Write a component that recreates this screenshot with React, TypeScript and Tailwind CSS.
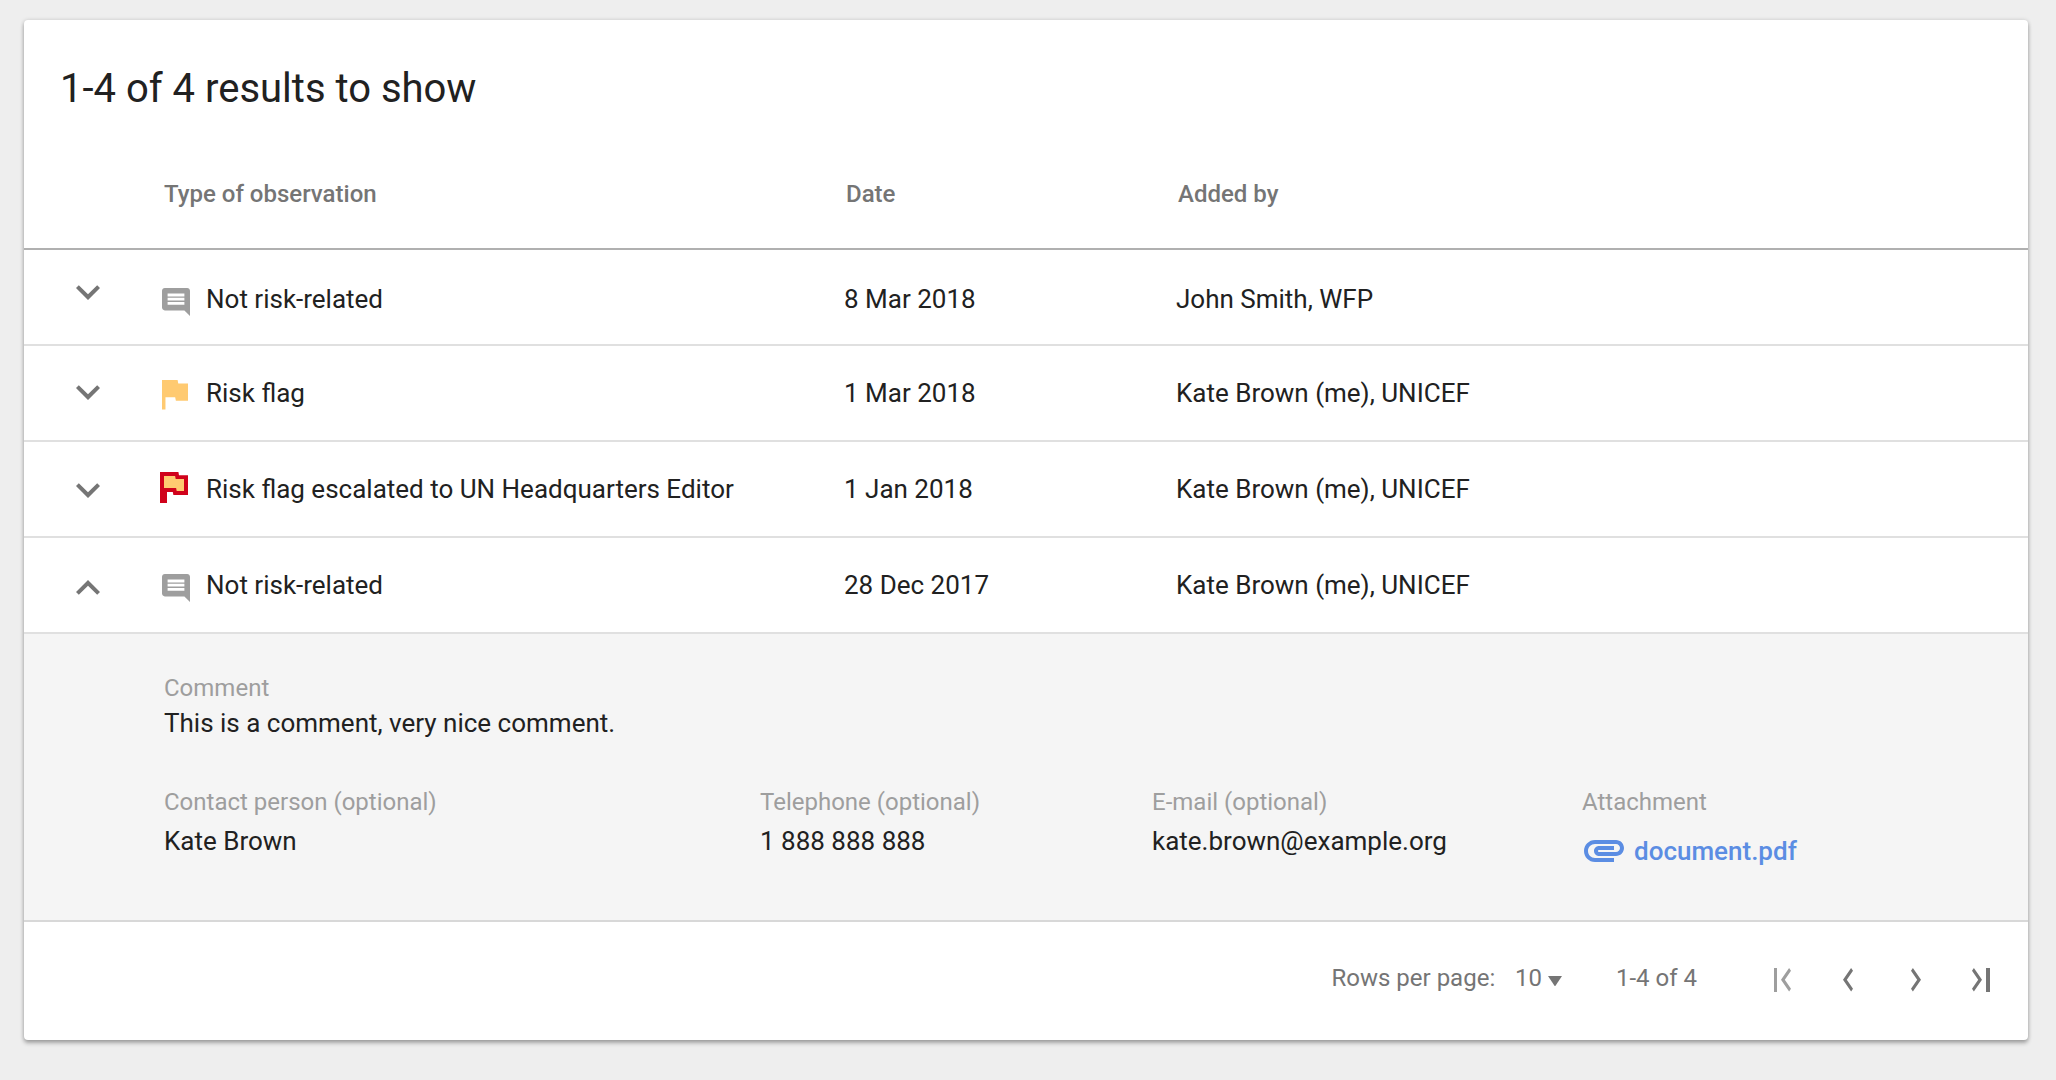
import type { ReactNode } from "react";

type Kind = "comment" | "flag" | "escalated";

type Observation = {
  kind: Kind;
  label: string;
  date: string;
  author: string;
  open?: boolean;
  textClass: string;
  chevronClass: string;
  iconClass: string;
};

const observations: Observation[] = [
  {
    kind: "comment",
    label: "Not risk-related",
    date: "8 Mar 2018",
    author: "John Smith, WFP",
    textClass: "pt-1",
    chevronClass: "pt-[18px]",
    iconClass: "pt-[38px]",
  },
  {
    kind: "flag",
    label: "Risk flag",
    date: "1 Mar 2018",
    author: "Kate Brown (me), UNICEF",
    textClass: "",
    chevronClass: "pt-[22px]",
    iconClass: "pt-[34px]",
  },
  {
    kind: "escalated",
    label: "Risk flag escalated to UN Headquarters Editor",
    date: "1 Jan 2018",
    author: "Kate Brown (me), UNICEF",
    textClass: "",
    chevronClass: "pt-6",
    iconClass: "pt-[30px]",
  },
  {
    kind: "comment",
    label: "Not risk-related",
    date: "28 Dec 2017",
    author: "Kate Brown (me), UNICEF",
    open: true,
    textClass: "",
    chevronClass: "pt-[26px]",
    iconClass: "pt-9",
  },
];

function ExpandIcon({ open }: { open?: boolean }) {
  return (
    <svg className="size-12 text-[#757575]" viewBox="0 0 24 24" fill="currentColor">
      <path
        d={
          open
            ? "M12 8l-6 6 1.41 1.41L12 10.83l4.59 4.58L18 14z"
            : "M16.59 8.59L12 13.17 7.41 8.59 6 10l6 6 6-6z"
        }
      />
    </svg>
  );
}

function KindIcon({ kind }: { kind: Kind }) {
  if (kind === "comment") {
    return (
      <svg className="ml-0.5 h-7 w-7 text-[#9e9e9e]" viewBox="2 2 20 20" fill="currentColor">
        <path d="M21.99 4c0-1.1-.89-2-1.99-2H4c-1.1 0-2 .9-2 2v12c0 1.1.9 2 2 2h14l4 4-.01-18zM18 14H6v-2h12v2zm0-3H6V9h12v2zm0-3H6V6h12v2z" />
      </svg>
    );
  }
  if (kind === "flag") {
    return (
      <svg className="ml-0.5 h-[29.5px] w-[26px] text-[#ffca71]" viewBox="5 4 15 17" fill="currentColor">
        <path d="M14.4 6L14 4H5v17h2v-7h5.6l.4 2h7V6z" />
      </svg>
    );
  }
  return (
    <svg className="h-[31px] w-7" viewBox="0 0 28 31">
      <path fill="#d0021b" d="M0 0H18.4L19 3.2H28V23H13.4L12.8 20H7V31H0z" />
      <path fill="#ffca71" d="M4 4H15.1L15.7 7.1H24V19H16.7L16.1 16H4z" />
    </svg>
  );
}

function Chevron({ right }: { right?: boolean }) {
  return (
    <svg
      className="h-[23.5px] w-[10px]"
      viewBox={right ? "8.59 6 7.41 12" : "8 6 7.41 12"}
      preserveAspectRatio="none"
      fill="currentColor"
    >
      <path
        d={
          right
            ? "M10 6L8.59 7.41 13.17 12l-4.58 4.59L10 18l6-6z"
            : "M15.41 7.41L14 6l-6 6 6 6 1.41-1.41L10.83 12z"
        }
      />
    </svg>
  );
}

function Field({ label, className, children }: { label: string; className: string; children: ReactNode }) {
  return (
    <div className={className}>
      <div className="text-2xl leading-7 text-[#9e9e9e]">{label}</div>
      {children}
    </div>
  );
}

export default function App() {
  return (
    <div className="h-[1080px] w-[2056px] bg-[#eeeeee] px-6 pt-5 font-[Roboto,sans-serif] text-[26px] leading-8 whitespace-nowrap text-[#212121]">
      <main className="h-[1020px] w-[2004px] rounded-[4px] bg-white shadow-[0_0_4px_rgba(0,0,0,0.14),0_3px_4px_rgba(0,0,0,0.3)]">
        <h1 className="h-[138px] pt-[45px] pl-9 text-[40px] leading-[48px]">1-4 of 4 results to show</h1>

        <div className="flex h-[92px] border-b-2 border-[#b0b0b0] pt-[22px] pl-[140px] text-2xl leading-7 font-medium text-[#757575]">
          <div className="w-[682px]">Type of observation</div>
          <div className="w-[332px]">Date</div>
          <div>Added by</div>
        </div>

        {observations.map((o) => (
          <div key={o.date} className="flex h-24 border-b-2 border-[#e0e0e0]">
            <div className={`w-[136px] pl-10 ${o.chevronClass}`}>
              <ExpandIcon open={o.open} />
            </div>
            <div className={`w-[46px] ${o.iconClass}`}>
              <KindIcon kind={o.kind} />
            </div>
            <div className={`flex items-center ${o.textClass}`}>
              <div className="w-[638px]">{o.label}</div>
              <div className="w-[332px]">{o.date}</div>
              <div>{o.author}</div>
            </div>
          </div>
        ))}

        <section className="h-[288px] border-b-2 border-[#d8d8d8] bg-[#f5f5f5] pt-10 pl-[140px]">
          <Field label="Comment" className="h-[114px]">
            <div className="pt-[5px]">This is a comment, very nice comment.</div>
          </Field>
          <div className="flex">
            <Field label="Contact person (optional)" className="w-[596px]">
              <div className="pt-[9px]">Kate Brown</div>
            </Field>
            <Field label="Telephone (optional)" className="w-[392px]">
              <div className="pt-[9px]">1 888 888 888</div>
            </Field>
            <Field label="E-mail (optional)" className="w-[430px]">
              <div className="pt-[9px]">kate.brown@example.org</div>
            </Field>
            <Field label="Attachment" className="w-[240px]">
              <a className="flex pt-[10px] text-[#5b8de3]">
                <svg className="-ml-0.5 size-12 shrink-0" viewBox="0 0 24 24" fill="currentColor">
                  <path d="M2 12.5C2 9.46 4.46 7 7.5 7H18c2.21 0 4 1.79 4 4s-1.79 4-4 4H9.5C8.12 15 7 13.88 7 12.5S8.12 10 9.5 10H17v2H9.41c-.55 0-.55 1 0 1H18c1.1 0 2-.9 2-2s-.9-2-2-2H7.5C5.57 9 4 10.57 4 12.5S5.57 16 7.5 16H17v2H7.5C4.46 18 2 15.54 2 12.5z" />
                </svg>
                <span className="pt-[9px] pl-[6px] font-medium">document.pdf</span>
              </a>
            </Field>
          </div>
        </section>

        <footer className="flex h-[118px] pt-[42px] pl-[1307.5px] text-2xl leading-7 text-[#757575]">
          <div className="w-[183.5px]">Rows per page:</div>
          <div className="flex w-[101px]">
            10
            <svg className="mt-[11.5px] ml-[6.5px] h-[10.5px] w-[14px]" viewBox="0 0 14 10.5" fill="currentColor">
              <path d="M0 0h14L7 10.5z" />
            </svg>
          </div>
          <div className="w-[158px]">1-4 of 4</div>
          <div className="flex w-[69px] gap-[3.5px] pt-1 text-[#9e9e9e]">
            <span className="h-6 w-[3px] bg-current" />
            <Chevron />
          </div>
          <div className="w-[68px] pt-1">
            <Chevron />
          </div>
          <div className="w-[61px] pt-1">
            <Chevron right />
          </div>
          <div className="flex gap-1 pt-1">
            <Chevron right />
            <span className="h-6 w-[3.5px] bg-current" />
          </div>
        </footer>
      </main>
    </div>
  );
}
